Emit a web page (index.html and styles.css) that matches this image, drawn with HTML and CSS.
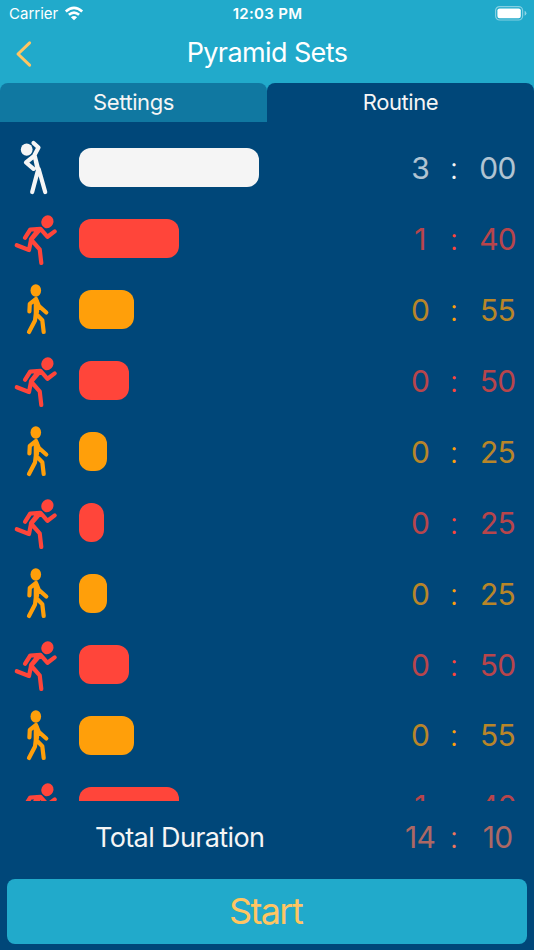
FILE: index.html
```
<!DOCTYPE html>
<html lang="en">
<head>
    <meta charset="UTF-8">
    <meta name="viewport" content="width=device-width, initial-scale=1.0">
    <title>Pyramid Sets</title>
    <link rel="stylesheet" href="styles.css">
</head>
<body>
    <!-- Shared activity icons -->
    <svg class="icon-defs">
        <symbol id="stretch" viewBox="0 0 60 71">
            <ellipse cx="26.7" cy="17.6" rx="5.9" ry="6.2"/>
            <path d="M33.5 11L38.5 15.5L34.5 23L38.5 38.5M33.5 24.5L26 30.5L33.5 36.8M35 25L37.5 37M38.3 37L32.2 60M38.7 37L45.2 60"/>
        </symbol>
        <symbol id="run" viewBox="0 0 60 71">
            <ellipse cx="47.4" cy="18.8" rx="6" ry="6.6" transform="rotate(25 47.4 18.8)"/>
            <path d="M25 34.8L30.3 26.5L40.5 25.8L47.5 33.8L54.7 28.4M40.5 26L31 37L29 47L16.8 42.2M31 36.5L39.7 46.3L41.3 60M38 27L31 36"/>
        </symbol>
        <symbol id="walk" viewBox="0 0 60 71">
            <ellipse cx="35.8" cy="16.5" rx="5.3" ry="6.2"/>
            <path d="M36 25L29.8 29.8L29.4 37.5M36 25L39 32.2L46.3 38.5M35.8 25V39.8L35 46.5L29 58M36 39.8L42.3 46.2L43.7 58M37 27V38"/>
        </symbol>
    </svg>

    <header class="header">
        <div class="status-bar">
            <div class="carrier">
                <span>Carrier</span>
                <svg class="wifi" viewBox="0 0 20 15">
                    <path d="M1.8 5.5Q10 -1.9 18.2 5.5M4.9 8.8Q10 4.3 15.1 8.8"/>
                    <path class="wifi-dot" d="M10 14.3L6.9 11.2Q10 8.8 13.1 11.2Z"/>
                </svg>
            </div>
            <div class="clock">12:03 PM</div>
            <svg class="battery" viewBox="0 0 32 15">
                <rect class="battery-case" x=".6" y=".6" width="27" height="13.4" rx="4"/>
                <rect x="2.4" y="2.4" width="23.4" height="9.8" rx="2.2"/>
                <path class="battery-tip" d="M29.6 4.8Q31.4 5.4 31.4 7.3Q31.4 9.2 29.6 9.8Z"/>
            </svg>
        </div>
        <div class="nav-bar">
            <svg class="back" viewBox="0 0 18 28"><path d="M14.6 2.8L3 14L14.6 25.2"/></svg>
            <h1 class="title">Pyramid Sets</h1>
        </div>
        <div class="tabs">
            <div class="tab">Settings</div>
            <div class="tab active">Routine</div>
        </div>
    </header>

    <main class="routine">
        <div class="step warmup">
            <svg class="icon"><use href="#stretch"/></svg>
            <div class="bar" style="width: 180px"></div>
            <div class="time"><span>3</span><b>:</b><span>00</span></div>
        </div>
        <div class="step fast">
            <svg class="icon"><use href="#run"/></svg>
            <div class="bar" style="width: 100px"></div>
            <div class="time"><span>1</span><b>:</b><span>40</span></div>
        </div>
        <div class="step slow">
            <svg class="icon"><use href="#walk"/></svg>
            <div class="bar" style="width: 55px"></div>
            <div class="time"><span>0</span><b>:</b><span>55</span></div>
        </div>
        <div class="step fast">
            <svg class="icon"><use href="#run"/></svg>
            <div class="bar" style="width: 50px"></div>
            <div class="time"><span>0</span><b>:</b><span>50</span></div>
        </div>
        <div class="step slow">
            <svg class="icon"><use href="#walk"/></svg>
            <div class="bar" style="width: 27.5px"></div>
            <div class="time"><span>0</span><b>:</b><span>25</span></div>
        </div>
        <div class="step fast">
            <svg class="icon"><use href="#run"/></svg>
            <div class="bar" style="width: 25px"></div>
            <div class="time"><span>0</span><b>:</b><span>25</span></div>
        </div>
        <div class="step slow">
            <svg class="icon"><use href="#walk"/></svg>
            <div class="bar" style="width: 27.5px"></div>
            <div class="time"><span>0</span><b>:</b><span>25</span></div>
        </div>
        <div class="step fast">
            <svg class="icon"><use href="#run"/></svg>
            <div class="bar" style="width: 50px"></div>
            <div class="time"><span>0</span><b>:</b><span>50</span></div>
        </div>
        <div class="step slow">
            <svg class="icon"><use href="#walk"/></svg>
            <div class="bar" style="width: 55px"></div>
            <div class="time"><span>0</span><b>:</b><span>55</span></div>
        </div>
        <div class="step fast">
            <svg class="icon"><use href="#run"/></svg>
            <div class="bar" style="width: 100px"></div>
            <div class="time"><span>1</span><b>:</b><span>40</span></div>
        </div>
    </main>

    <footer class="footer">
        <div class="total">
            <div class="total-label">Total Duration</div>
            <div class="time"><span>14</span><b>:</b><span>10</span></div>
        </div>
        <button class="start">Start</button>
    </footer>
</body>
</html>
```
FILE: styles.css
```
* {
    box-sizing: border-box;
}
body {
    margin: 0;
    height: 950px;
    display: flex;
    flex-direction: column;
    overflow: hidden;
    background: #004779;
    color: #f5f5f5;
    font-family: Inter, "Liberation Sans", sans-serif;
}
.icon-defs {
    display: block;
    width: 0;
    height: 0;
}

/* Header */
.header {
    background: #21aacb;
    color: white;
}
.status-bar {
    height: 28px;
    padding: 0 7px 0 9px;
    display: grid;
    grid-template-columns: 1fr auto 1fr;
    align-items: center;
    font-size: 15px;
}
.status-bar > * {
    margin-top: -1px;
}
.carrier {
    display: flex;
    align-items: center;
    gap: 6px;
}
.wifi {
    width: 20px;
    height: 15px;
    margin-top: -1px;
    fill: none;
    stroke: white;
    stroke-width: 2.6;
}
.wifi .wifi-dot {
    fill: white;
    stroke: none;
}
.clock {
    margin-left: -1px;
    font-weight: 600;
    letter-spacing: 0.3px;
}
.battery {
    justify-self: end;
    width: 32px;
    height: 15px;
    fill: white;
}
.battery-case {
    fill: none;
    stroke: rgba(255,255,255,0.45);
    stroke-width: 1.2;
}
.battery-tip {
    fill: rgba(255,255,255,0.5);
}
.nav-bar {
    height: 55px;
    padding: 0 15px;
    display: grid;
    grid-template-columns: 40px 1fr 40px;
    align-items: center;
}
.back {
    width: 18px;
    height: 28px;
    margin-top: -3px;
    fill: none;
    stroke: #ffc562;
    stroke-width: 3;
    stroke-linecap: round;
    stroke-linejoin: round;
}
.title {
    margin: -7px 0 0;
    text-align: center;
    font-size: 27px;
    font-weight: 400;
    letter-spacing: -0.6px;
}
.tabs {
    display: flex;
}
.tab {
    flex: 1;
    height: 38.5px;
    line-height: 38.5px;
    border-radius: 8px 8px 0 0;
    background: #1078a1;
    color: #f5f5f5;
    text-align: center;
    font-size: 22px;
    letter-spacing: -0.4px;
}
.tab.active {
    background: #004779;
}

/* Routine steps */
.routine {
    height: 679.5px;
    padding-top: 11px;
    overflow: hidden;
}
.step {
    height: 70.95px;
    padding-right: 6px;
    display: flex;
    align-items: center;
    color: #f5f5f5;
}
.step.fast { color: #ff453a; }
.step.slow { color: #ff9f0a; }
.icon {
    width: 60px;
    height: 71px;
    margin-right: 19.3px;
    fill: currentColor;
    stroke: currentColor;
    stroke-width: 4.2;
    stroke-linecap: round;
    stroke-linejoin: round;
}
.icon-defs ellipse {
    stroke: none;
}
.icon-defs path {
    fill: none;
}
.bar {
    height: 39px;
    margin-bottom: 0.6px;
    border-radius: 12px;
    background: currentColor;
}
.time {
    margin-left: auto;
    display: grid;
    grid-template-columns: 40px 27px 61px;
    text-align: center;
    font-size: 30px;
    font-weight: 400;
    line-height: 36px;
    letter-spacing: -0.8px;
}
.time span {
    opacity: 0.72;
}
.time b {
    font-weight: 300;
}

/* Footer */
.footer {
    padding: 0 7px;
}
.total {
    height: 78px;
    margin-right: -1px;
    padding-bottom: 6px;
    display: flex;
    align-items: center;
}
.total-label {
    margin-left: 88px;
    font-size: 27px;
    letter-spacing: -0.62px;
}
.total .time {
    color: #f0765c;
}
.start {
    display: block;
    width: 520px;
    height: 64.5px;
    padding: 0 3px 0 0;
    border: 0;
    border-radius: 8px;
    background: #21aacb;
    color: #ffc562;
    font: 400 36px Inter, "Liberation Sans", sans-serif;
    letter-spacing: -1.6px;
}
```
